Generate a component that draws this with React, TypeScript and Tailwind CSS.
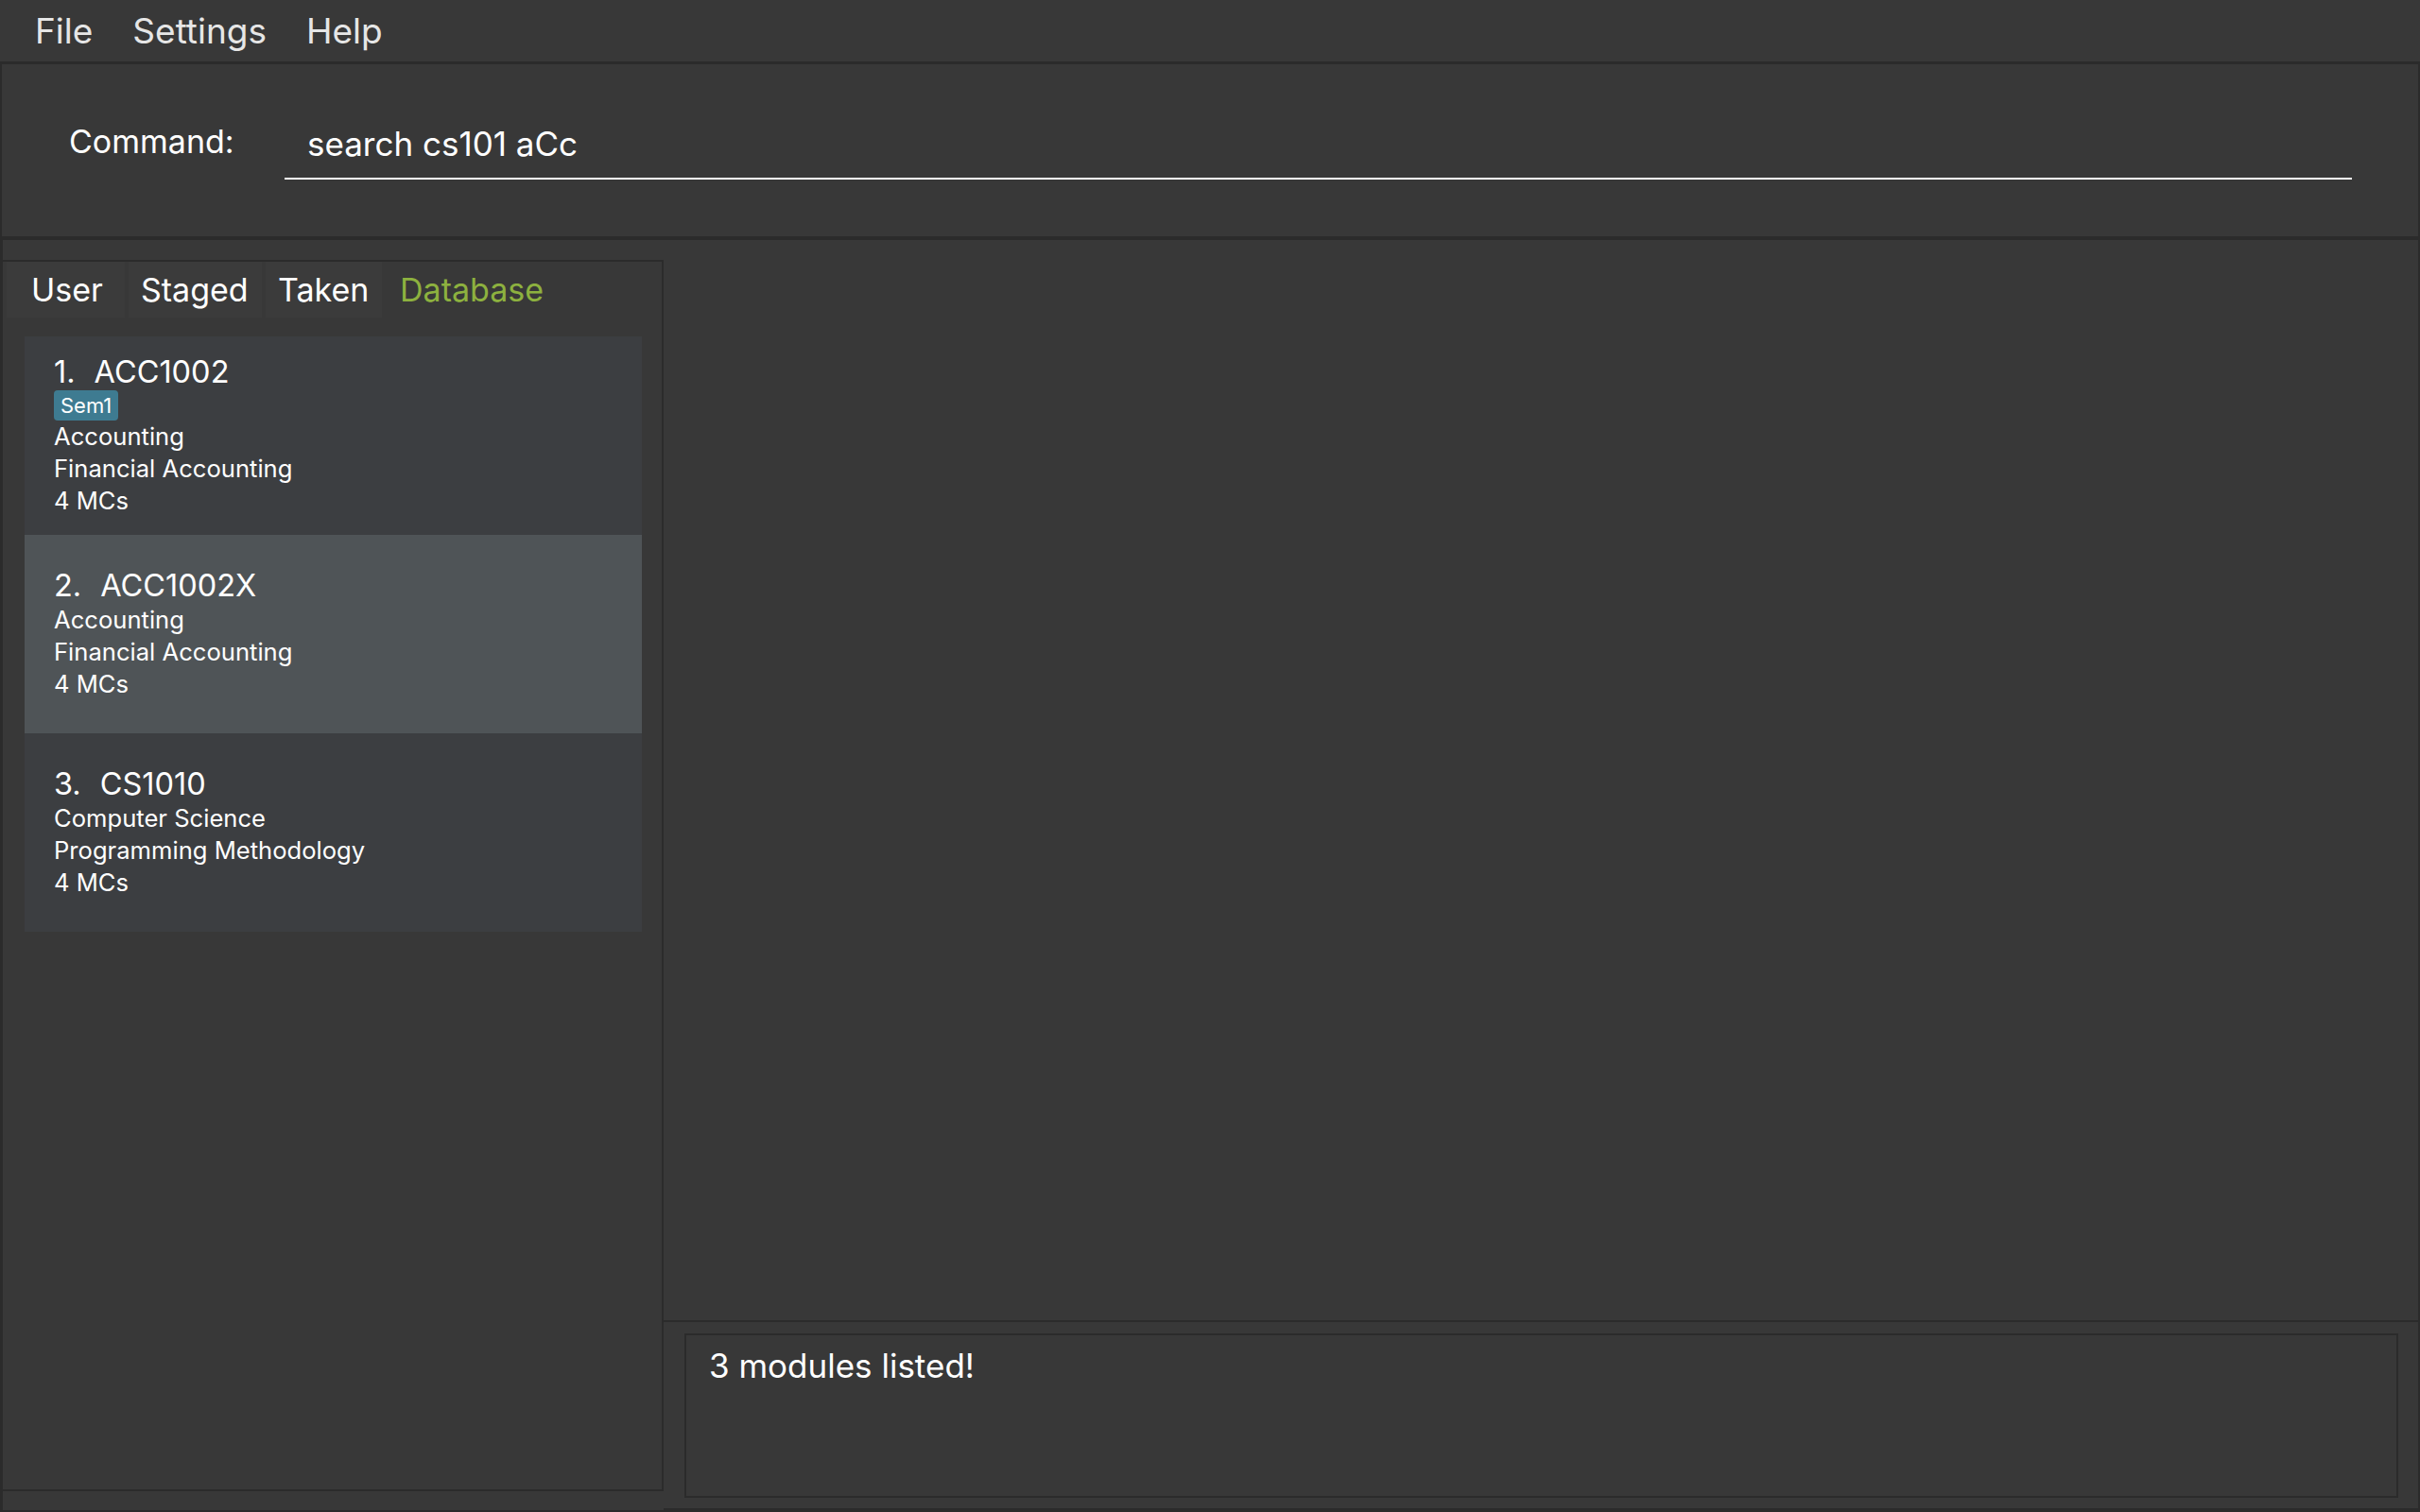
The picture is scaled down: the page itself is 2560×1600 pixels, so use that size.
import React from "react";

type Mod = {
  n: number;
  code: string;
  tags: string[];
  dept: string;
  title: string;
  mcs: number;
  selected?: boolean;
};

const modules: Mod[] = [
  { n: 1, code: "ACC1002", tags: ["Sem1"], dept: "Accounting", title: "Financial Accounting", mcs: 4 },
  { n: 2, code: "ACC1002X", tags: [], dept: "Accounting", title: "Financial Accounting", mcs: 4, selected: true },
  { n: 3, code: "CS1010", tags: [], dept: "Computer Science", title: "Programming Methodology", mcs: 4 },
];

const tabs = [
  { label: "User", cls: "w-[125px] pl-[26px]" },
  { label: "Staged", cls: "w-[141px] pl-[13px]" },
  { label: "Taken", cls: "w-[123px] pl-[13px]" },
];

function ModuleCard({ m }: { m: Mod }) {
  return (
    <div
      className={
        "flex h-[210px] flex-col justify-center pl-[31px] text-white " +
        (m.selected ? "bg-[#4f5457]" : "bg-[#3c3e41]")
      }
    >
      <div className="flex gap-[20px] text-[32.5px] leading-[38px]">
        <span>{m.n}.</span>
        <span>{m.code}</span>
      </div>
      {m.tags.length > 0 && (
        <div className="flex h-[32px] items-center">
          {m.tags.map((t) => (
            <span key={t} className="rounded-[4px] bg-[#3e7b91] px-[7px] text-[22px] leading-[32px]">
              {t}
            </span>
          ))}
        </div>
      )}
      <div className="text-[25.6px] leading-[34px]">{m.dept}</div>
      <div className="text-[25.6px] leading-[34px]">{m.title}</div>
      <div className="text-[25.6px] leading-[34px]">{m.mcs} MCs</div>
    </div>
  );
}

export default function App() {
  return (
    <div className="flex h-screen w-full flex-col bg-[#2b2b2b] font-['Inter',sans-serif] text-white">
      {/* menu bar */}
      <div className="flex h-[65px] shrink-0 items-center bg-[#383838] pl-4 text-[37px] text-[#e6e6e6]">
        {["File", "Settings", "Help"].map((m) => (
          <span key={m} className="px-[21px] leading-none">
            {m}
          </span>
        ))}
      </div>

      {/* command box */}
      <div className="mx-[2px] mt-[3px] flex h-[182px] shrink-0 items-start bg-[#383838]">
        <div className="ml-[71px] mt-[65px] w-[228px] text-[34px] leading-none">Command:</div>
        <div className="mr-[70px] mt-[67px] flex-1 border-b-2 border-white pb-[18px] pl-[24px] text-[35px] leading-none">
          search cs101 aCc
        </div>
      </div>

      {/* main */}
      <div className="mb-[2px] mt-[4px] flex min-h-0 flex-1">
        <div className="ml-[3px] flex w-[699px] flex-col bg-[#383838] pb-[20px] pt-[21px]">
          <div className="flex flex-1 flex-col border-b-2 border-r-2 border-t-2 border-[#2b2b2b] bg-[#383838]">
            <div className="ml-[4px] flex h-[59px] gap-[4px] text-[34px] leading-[59px]">
              {tabs.map((t) => (
                <div key={t.label} className={"bg-[#3b3b3b] " + t.cls}>
                  {t.label}
                </div>
              ))}
              <div className="pl-[15px] text-[#8db13f]">Database</div>
            </div>
            <div className="ml-[23px] mr-[21px] mt-[20px] flex flex-col">
              {modules.map((m) => (
                <ModuleCard key={m.n} m={m} />
              ))}
            </div>
          </div>
        </div>

        <div className="mr-[2px] flex flex-1 flex-col gap-[2px]">
          <div className="flex-1 bg-[#383838]" />
          <div className="mb-[2px] h-[197px] bg-[#383838] pb-[11px] pl-[22px] pr-[21px] pt-[12px]">
            <div className="h-full border-2 border-[#2b2b2b] pl-[24px] pt-[15px] text-[35px] leading-none">
              3 modules listed!
            </div>
          </div>
        </div>
      </div>
    </div>
  );
}
